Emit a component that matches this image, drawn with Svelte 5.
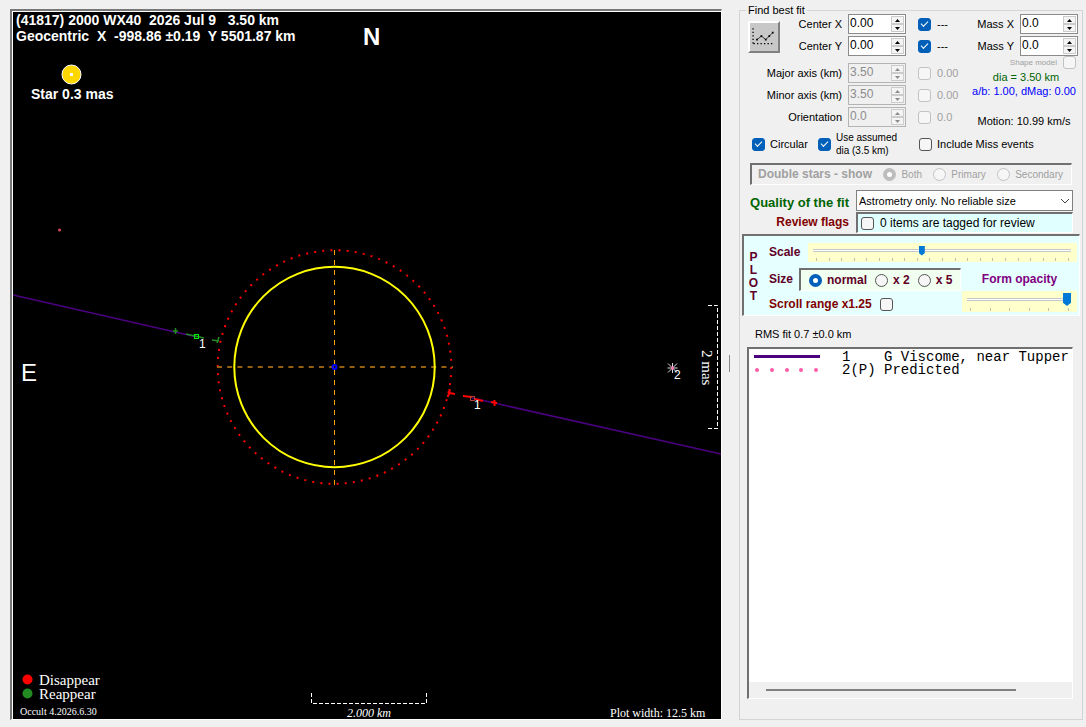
<script>
  let params = $state([
    { id: 'cx', label: 'Center X', value: '0.00', fit: true, note: '---', off: false },
    { id: 'cy', label: 'Center Y', value: '0.00', fit: true, note: '---', off: false },
    { id: 'major', label: 'Major axis (km)', value: '3.50', fit: false, note: '0.00', off: true },
    { id: 'minor', label: 'Minor axis (km)', value: '3.50', fit: false, note: '0.00', off: true },
    { id: 'orient', label: 'Orientation', value: '0.0', fit: false, note: '0.0', off: true }
  ]);
  let masses = $state([
    { id: 'mx', label: 'Mass X', value: '0.0' },
    { id: 'my', label: 'Mass Y', value: '0.0' }
  ]);
  let size = $state('normal');
  let scale = $state(42);
  let opacity = $state(100);
  const sizes = [['normal', 'normal'], ['x2', 'x 2'], ['x5', 'x 5']];
  const doubles = ['Both', 'Primary', 'Secondary'];

  function step(item, amount) {
    const digits = item.value.split('.')[1].length;
    item.value = (Number(item.value) + amount * 10 ** -digits).toFixed(digits);
  }
</script>

{#snippet spinner(item)}
  <span class="spin" class:off={item.off}>
    <input id={item.id} type="text" bind:value={item.value} disabled={item.off} />
    <span class="arrows">
      <button type="button" aria-label="Increase" disabled={item.off} onclick={() => step(item, 1)}>
        <svg viewBox="0 0 5 3"><path d="M0 3 2.5 0 5 3z" /></svg>
      </button>
      <button type="button" aria-label="Decrease" disabled={item.off} onclick={() => step(item, -1)}>
        <svg viewBox="0 0 5 3"><path d="M0 0 2.5 3 5 0z" /></svg>
      </button>
    </span>
  </span>
{/snippet}

<main>
  <section class="plot">
    <svg viewBox="13 12 708 707">
      <rect x="13" y="12" width="708" height="707" fill="#000" />
      <g class="head">
        <text x="16" y="25">(41817) 2000 WX40&nbsp; 2026 Jul 9&nbsp;&nbsp; 3.50 km</text>
        <text x="16" y="41">Geocentric&nbsp; X&nbsp; -998.86 ±0.19&nbsp; Y 5501.87 km</text>
        <text x="31" y="99">Star 0.3 mas</text>
      </g>
      <text class="north" x="363" y="45">N</text>
      <text class="east" x="21" y="381">E</text>

      <circle cx="71.500" cy="74.500" r="9.500" fill="#ffd700" stroke="#fff" />
      <rect x="70" y="73" width="3" height="3" fill="#fff" />
      <circle cx="59.500" cy="230" r="1.500" fill="#d9485a" />

      <g fill="none">
        <path d="M13 295 197 337M472 398 721 454" stroke="#4b0082" stroke-width="1.600" />
        <circle cx="334.500" cy="367" r="116.800" stroke="#f00" stroke-width="2" stroke-dasharray="2 6.150" />
        <path d="M217 367H453" stroke="#946010" stroke-width="2" stroke-dasharray="5 5.200" />
        <path d="M334.500 250V485" stroke="#ffa500" stroke-dasharray="5 5" />
        <circle cx="334.500" cy="367" r="100.200" stroke="#ff0" stroke-width="2" />
        <circle cx="334.500" cy="367" r="2" stroke="#00f" stroke-width="2" />
        <path d="M175.500 328v6M173 331h5M186 334l18 4M212 340l7 1M219 337l-2 6" stroke="#228b22" stroke-width="1.500" />
        <rect x="194.500" y="334.500" width="4" height="4" stroke="#0e0" />
        <path d="M449.500 389v4l-2 4M449 393l6 1M463 396l9 1M475 399l8 2M494.500 400v6M491 402l6 1" stroke="#f00" stroke-width="2" />
        <rect x="470.500" y="396.500" width="4" height="4" stroke="#b84030" />
        <path d="M668 363.500l9 9M677 363.500l-9 9M672.500 363v10M667.500 368h10" stroke="#ddd" />
        <path d="M708 305.500h9.500V429M708 428.500h9" stroke="#fff" stroke-dasharray="4 2" />
        <path d="M311.500 693v10.500H426.500V693" stroke="#fff" stroke-dasharray="4 2" />
      </g>
      <circle cx="672.500" cy="368" r="1.500" fill="#ff69b4" />
      <g class="tag">
        <text x="199" y="348">1</text>
        <text x="474" y="409">1</text>
        <text x="674" y="379">2</text>
      </g>
      <text class="mas" transform="translate(702 350) rotate(90)">2 mas</text>

      <circle cx="27.500" cy="679.500" r="5" fill="#f00" />
      <circle cx="27.500" cy="693.500" r="5" fill="#228b22" />
      <g class="legend">
        <text x="39" y="685">Disappear</text>
        <text x="39" y="699">Reappear</text>
      </g>
      <text class="version" x="20" y="715">Occult 4.2026.6.30</text>
      <text class="bar" x="347" y="717">2.000 km</text>
      <text class="width" x="610" y="717">Plot width: 12.5 km</text>
    </svg>
  </section>

  <div class="splitter"></div>

  <fieldset class="panel">
    <legend>Find best fit</legend>

    <div class="top">
      <div class="fit">
        <button class="chart" type="button" aria-label="Fit">
          <svg viewBox="0 0 32 32">
            <path d="M3.500 6v19M4 23.500h23" fill="none" stroke="#000" stroke-width="1.500" stroke-dasharray="1.500 2.500" />
            <path d="M8 19l5-4 5 4 8-8" fill="none" stroke="#222" />
            <path d="M7 18h2v2H7zM12 14h2v2h-2zM17 18h2v2h-2zM21 14h2v2h-2zM25 10h2v2h-2z" />
          </svg>
        </button>
        {#each params as p}
          <div class="param" class:gap={p.id === 'major'}>
            <label for={p.id}>{p.label}</label>
            {@render spinner(p)}
            <label class="note" class:dim={p.off}>
              <input type="checkbox" bind:checked={p.fit} disabled={p.off} />{p.note}
            </label>
          </div>
        {/each}
      </div>
      <div class="mass">
        {#each masses as m}
          <div class="param">
            <label for={m.id}>{m.label}</label>
            {@render spinner(m)}
          </div>
        {/each}
        <label class="shape">Shape model<input type="checkbox" disabled /></label>
        <p class="dia">dia = 3.50 km</p>
        <p class="ratio">a/b: 1.00, dMag: 0.00</p>
        <p class="motion">Motion: 10.99 km/s</p>
      </div>
    </div>

    <div class="options">
      <label><input type="checkbox" checked />Circular</label>
      <label class="assumed"><input type="checkbox" checked /><span>Use assumed<br />dia (3.5 km)</span></label>
      <label class="miss"><input type="checkbox" />Include Miss events</label>
    </div>

    <div class="doubles sunk">
      <strong>Double stars - show</strong>
      {#each doubles as d, i}
        <label><input type="radio" name="double" checked={i === 0} disabled />{d}</label>
      {/each}
    </div>

    <div class="quality">
      <label class="good" for="quality">Quality of the fit</label>
      <span class="pick">
        <select id="quality"><option>Astrometry only. No reliable size</option></select>
        <svg viewBox="0 0 10 6"><path d="M1 1l4 4 4-4" fill="none" stroke="#444" /></svg>
      </span>
      <span class="review">Review flags</span>
      <label class="flags sunk"><input type="checkbox" />0 items are tagged for review</label>
    </div>

    <div class="view sunk">
      <div class="word"><span>P</span><span>L</span><span>O</span><span>T</span></div>
      <div class="settings">
        <div class="scale">
          <label for="scale">Scale</label>
          <div class="slider">
            <input id="scale" type="range" bind:value={scale} />
            <div class="ticks">{#each Array(21) as _}<i></i>{/each}</div>
          </div>
        </div>
        <div class="lower">
          <div class="left">
            <div class="size">
              <span>Size</span>
              <div class="sizes sunk">
                {#each sizes as [value, text]}
                  <label><input type="radio" name="size" {value} bind:group={size} />{text}</label>
                {/each}
              </div>
            </div>
            <label class="range">Scroll range x1.25<input type="checkbox" /></label>
          </div>
          <div class="right">
            <label for="opacity">Form opacity</label>
            <div class="slider tall">
              <input id="opacity" type="range" bind:value={opacity} />
              <div class="ticks">{#each Array(6) as _}<i></i>{/each}</div>
            </div>
          </div>
        </div>
      </div>
    </div>

    <p class="rms">RMS fit 0.7 ±0.0 km</p>

    <div class="list sunk">
      <ul>
        <li>
          <svg viewBox="0 0 66 12"><path d="M0 5.500h66" stroke="#4b0082" stroke-width="3" /></svg>
          <pre>1    G Viscome, near Tupper</pre>
        </li>
        <li>
          <svg viewBox="0 0 66 12">
            {#each [3, 18, 33, 47, 62] as x}<circle cx={x} cy="6" r="2" fill="#ff5ca8" />{/each}
          </svg>
          <pre>2(P) Predicted</pre>
        </li>
      </ul>
      <div class="scroll"><div></div></div>
    </div>
  </fieldset>
</main>

<style>
  :global(body) {
    margin: 0;
    background: #f0f0f0;
  }
  main {
    display: grid;
    grid-template-columns: minmax(0, 1fr) 17px 344px;
    padding: 7px 3px 7px 10px;
    font: 11px/13px 'Liberation Sans', Arial, sans-serif;
    color: #000;
  }
  main * {
    box-sizing: border-box;
  }
  p,
  pre,
  ul {
    margin: 0;
    padding: 0;
  }
  svg {
    display: block;
  }

  .plot {
    align-self: start;
    margin-top: 2px;
    border: 1px solid #fff;
    border-width: 0 1px 1px 0;
    background: #fff;
    padding: 1px 0 0 1px;
    border-left: 2px solid #787878;
    border-top: 2px solid #787878;
  }
  .plot svg {
    width: 100%;
  }
  .plot text {
    fill: #fff;
    font-family: 'Liberation Sans', Arial, sans-serif;
  }
  .head text {
    font-size: 14px;
    font-weight: bold;
  }
  .plot .north {
    font-size: 24px;
    font-weight: bold;
  }
  .plot .east {
    font-size: 24px;
  }
  .tag text {
    font-size: 12px;
  }
  .plot .mas,
  .plot .legend text,
  .plot .version,
  .plot .bar,
  .plot .width {
    font-family: 'Liberation Serif', 'Times New Roman', serif;
  }
  .plot .mas,
  .legend text {
    font-size: 15px;
  }
  .plot .version {
    font-size: 10px;
  }
  .plot .bar {
    font-size: 12px;
    font-style: italic;
  }
  .plot .width {
    font-size: 12px;
  }

  .splitter {
    align-self: center;
    justify-self: center;
    width: 1px;
    height: 17px;
    margin-right: 2px;
    background: #888;
  }

  .panel {
    display: flex;
    flex-direction: column;
    min-width: 0;
    margin: 0;
    padding: 0;
    border: 1px solid #d4d4d4;
  }
  legend {
    height: 6px;
    margin-left: 6px;
    padding: 0 2px;
    line-height: 6px;
  }

  input[type='checkbox'],
  input[type='radio'] {
    appearance: none;
    flex: none;
    display: grid;
    place-content: center;
    width: 13px;
    height: 13px;
    margin: 0;
    border: 1px solid #555;
    border-radius: 3px;
    background: #f6f6f6;
  }
  input[type='checkbox']:checked {
    border-color: #005fb8;
    background: #005fb8;
  }
  input[type='checkbox']:checked::before {
    content: '';
    width: 6px;
    height: 3px;
    margin-bottom: 2px;
    border: solid #fff;
    border-width: 0 0 1px 1px;
    rotate: -45deg;
  }
  input[type='radio'] {
    border-radius: 50%;
  }
  input[type='radio']:checked {
    border: 4px solid #005fb8;
    background: #fff;
  }
  input[type='checkbox']:disabled,
  input[type='radio']:disabled {
    border-color: #c2c2c2;
  }
  .sunk {
    border: 1px solid #fff;
    border-left: 2px solid #707070;
    border-top: 2px solid #707070;
  }

  .top {
    display: flex;
    justify-content: space-between;
    padding: 0 4px 0 8px;
  }
  .fit {
    display: grid;
    grid-template-columns: 32px 1fr;
    width: 216px;
  }
  .fit .param {
    grid-column: 1 / -1;
  }
  .chart {
    grid-area: 1 / 1 / 3 / 2;
    align-self: center;
    z-index: 1;
    width: 32px;
    height: 32px;
    margin-top: 4px;
    padding: 0;
    border: 2px solid #fff;
    border-right-color: #808080;
    border-bottom-color: #808080;
    background: #c8c8c8;
  }
  .fit .param:nth-of-type(1) {
    grid-row: 1;
  }
  .fit .param:nth-of-type(2) {
    grid-row: 2;
  }
  .param {
    display: flex;
    align-items: center;
    justify-content: flex-end;
    gap: 6px;
    height: 22px;
  }
  .gap {
    margin-top: 5px;
  }
  .spin {
    display: flex;
    width: 58px;
    height: 20px;
    border: 1px solid #8a8a8a;
    background: #fff;
  }
  .spin input {
    flex: 1;
    min-width: 0;
    padding: 0 0 2px 1px;
    border: 0;
    background: none;
    font: 12px/14px 'Liberation Sans', Arial, sans-serif;
    color: #000;
  }
  .arrows {
    display: grid;
    width: 14px;
    padding: 1px 1px 1px 0;
  }
  .arrows button {
    display: grid;
    place-content: center;
    padding: 0;
    border: 1px solid #ccc;
    background: #f4f4f4;
  }
  .arrows svg {
    width: 5px;
    height: 3px;
  }
  .off,
  .off input {
    border-color: #b4b4b4;
    background: #f0f0f0;
    color: #8c8c8c;
  }
  .off svg {
    fill: #8c8c8c;
  }
  .note {
    display: flex;
    align-items: center;
    gap: 6px;
    width: 46px;
    margin-left: 6px;
  }
  .dim {
    color: #a0a0a0;
  }
  .mass {
    width: 108px;
    text-align: center;
    white-space: nowrap;
  }
  .shape {
    display: flex;
    align-items: center;
    justify-content: flex-end;
    gap: 6px;
    height: 11px;
    padding-right: 2px;
    font-size: 8px;
    color: #a0a0a0;
  }
  .dia {
    margin-top: 3px;
    padding-left: 4px;
    color: #006400;
  }
  .ratio {
    margin-top: 1px;
    color: #00f;
  }
  .motion {
    margin-top: 17px;
  }

  .options {
    display: flex;
    align-items: center;
    gap: 10px;
    height: 26px;
    margin-top: 3px;
    padding-left: 12px;
  }
  .options label {
    display: flex;
    align-items: center;
    gap: 5px;
    white-space: nowrap;
  }
  .options .assumed {
    font-size: 10px;
  }
  .miss {
    margin-left: 12px;
  }

  .doubles {
    display: flex;
    align-items: center;
    justify-content: space-between;
    height: 22px;
    margin: 6px 10px 0 10px;
    padding: 0 8px 0 6px;
    color: #a0a0a0;
  }
  .doubles strong {
    font-size: 12px;
  }
  .doubles label {
    display: flex;
    align-items: center;
    gap: 5px;
    font-size: 10px;
  }
  .doubles input[type='radio']:checked {
    border-color: #bdbdbd;
  }

  .quality {
    display: grid;
    grid-template-columns: 109px 1fr;
    align-items: center;
    gap: 1px 7px;
    margin: 5px 9px 0 0;
    font-weight: bold;
    text-align: right;
  }
  .good {
    padding-top: 3px;
    font-size: 13px;
    white-space: nowrap;
    color: #006400;
  }
  .review {
    font-size: 12px;
    color: #800000;
  }
  .pick {
    display: grid;
    align-items: center;
  }
  .pick select {
    grid-area: 1 / 1;
    appearance: none;
    width: 100%;
    height: 21px;
    padding: 0 2px;
    border: 1px solid #808080;
    border-radius: 0;
    background: #fff;
    font: 11px 'Liberation Sans', Arial, sans-serif;
    color: #000;
  }
  .pick svg {
    grid-area: 1 / 1;
    justify-self: end;
    width: 10px;
    margin-right: 3px;
    pointer-events: none;
  }
  .flags {
    display: flex;
    align-items: center;
    gap: 6px;
    height: 21px;
    padding-left: 3px;
    background: #e0ffff;
    font-size: 12px;
    font-weight: normal;
  }

  .view {
    display: flex;
    height: 82px;
    margin: 1px 2px 0 2px;
    background: #e6ffff;
    font-size: 12px;
    font-weight: bold;
    color: #600028;
  }
  .word {
    display: flex;
    flex-direction: column;
    width: 19px;
    padding-top: 15px;
    text-align: center;
  }
  .settings {
    flex: 1;
    padding: 7px 2px 0 6px;
  }
  .scale {
    display: flex;
    align-items: center;
    justify-content: space-between;
  }
  .slider {
    width: 269px;
    height: 19px;
    padding: 2px 6px 0 5px;
    background: #ffffcc;
  }
  .slider input {
    appearance: none;
    display: block;
    width: 100%;
    height: 11px;
    margin: 0;
    background: linear-gradient(#fff, #fff) center / 100% 1px no-repeat, linear-gradient(#c4c8c8, #c4c8c8) center / 100% 3px no-repeat;
  }
  .slider input::-webkit-slider-thumb {
    appearance: none;
    width: 6px;
    height: 10px;
    background: #0078d7;
    clip-path: polygon(0 0, 100% 0, 100% 75%, 50% 100%, 0 75%);
  }
  .ticks {
    display: flex;
    justify-content: space-between;
    padding: 2px 2px 0 3px;
  }
  .ticks i {
    width: 1px;
    height: 3px;
    background: #c4bcb0;
  }
  .slider.tall {
    width: 115px;
    height: 21px;
  }
  .tall input {
    height: 13px;
  }
  .tall input::-webkit-slider-thumb {
    width: 8px;
    height: 13px;
  }
  .lower {
    display: flex;
    justify-content: space-between;
    margin-top: 6px;
  }
  .size {
    display: flex;
    align-items: center;
    gap: 6px;
  }
  .sizes {
    display: flex;
    align-items: center;
    gap: 8px;
    height: 23px;
    padding: 0 8px 0 8px;
    background: #f0fff0;
  }
  .sizes label,
  .range {
    display: flex;
    align-items: center;
    gap: 5px;
    white-space: nowrap;
  }
  .range {
    gap: 8px;
    margin-top: 7px;
    color: #800000;
  }
  .right {
    display: flex;
    flex-direction: column;
    align-items: center;
    gap: 5px;
    padding-top: 5px;
    color: #800080;
  }

  .rms {
    margin: 12px 0 6px 15px;
  }
  .list {
    flex: 1;
    display: flex;
    flex-direction: column;
    margin: 0 9px 20px 7px;
    background: #fff;
  }
  ul {
    flex: 1;
    padding: 2px 0 0 5px;
    list-style: none;
  }
  li {
    display: flex;
    gap: 22px;
    height: 13px;
  }
  li svg {
    flex: none;
    width: 66px;
    height: 12px;
  }
  pre {
    font: 14px/13px 'Liberation Mono', 'Courier New', monospace;
  }
  .scroll {
    height: 16px;
    padding: 7px 56px 0 17px;
    background: #f0f0f0;
  }
  .scroll div {
    height: 2px;
    background: #808080;
  }
</style>
